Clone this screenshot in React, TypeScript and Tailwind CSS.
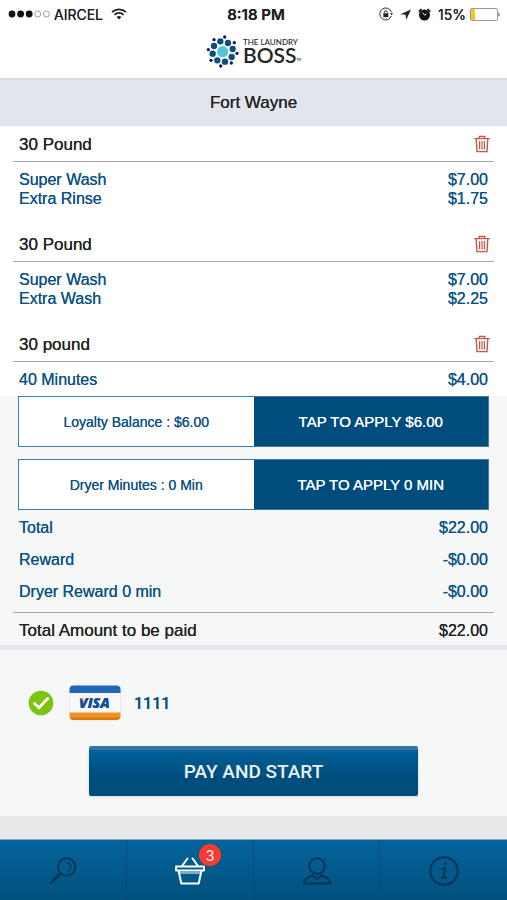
import React from 'react';

type LineItem = { name: string; price: string };
type Machine = { id: number; title: string; items: LineItem[] };

const machines: Machine[] = [
    {
        id: 1,
        title: '30 Pound',
        items: [
            { name: 'Super Wash', price: '$7.00' },
            { name: 'Extra Rinse', price: '$1.75' },
        ],
    },
    {
        id: 2,
        title: '30 Pound',
        items: [
            { name: 'Super Wash', price: '$7.00' },
            { name: 'Extra Wash', price: '$2.25' },
        ],
    },
    { id: 3, title: '30 pound', items: [{ name: '40 Minutes', price: '$4.00' }] },
];

const totals: LineItem[] = [
    { name: 'Total', price: '$22.00' },
    { name: 'Reward', price: '-$0.00' },
    { name: 'Dryer Reward 0 min', price: '-$0.00' },
];

const StatusBar: React.FC = () => (
    <div className="grid h-7 grid-cols-3 items-center pr-[7px] pl-2 font-['Inter',sans-serif] text-[14px] text-[#222]">
        <div className="flex items-center gap-1">
            <svg width="42" height="8" viewBox="0 0 42 8" aria-hidden="true">
                <circle cx="4" cy="4" r="3.4" fill="#111" />
                <circle cx="12.6" cy="4" r="3.4" fill="#111" />
                <circle cx="21.2" cy="4" r="3.4" fill="#111" />
                <circle cx="29.8" cy="4" r="3" fill="none" stroke="#777" strokeWidth="0.7" />
                <circle cx="38.4" cy="4" r="3" fill="none" stroke="#777" strokeWidth="0.7" />
            </svg>
            <span>AIRCEL</span>
            <svg className="ml-1" width="16" height="12" viewBox="0 0 16 12" fill="none" stroke="#222" aria-hidden="true">
                <path d="M1 4.2C5 0.3 11 0.3 15 4.2" strokeWidth="1.8" />
                <path d="M3.4 6.8C6 4.3 10 4.3 12.6 6.8" strokeWidth="1.8" />
                <path d="M8 11.5 5.6 8.9C7 7.7 9 7.7 10.4 8.9Z" fill="#222" stroke="none" />
            </svg>
        </div>
        <div className="pl-1 text-center text-[15px] font-semibold">8:18 PM</div>
        <div className="flex items-center justify-end gap-[7px]">
            <svg width="14" height="14" viewBox="0 0 14 14" fill="none" stroke="#333" aria-hidden="true">
                <path d="M12.5 5.2A6 6 0 1 0 12.4 9" />
                <path d="M11.1 6 14 6 12.6 8.4Z" fill="#333" stroke="none" />
                <rect x="4.3" y="6.3" width="5" height="3.9" fill="#222" stroke="none" />
                <path d="M5.3 6.5V5.2a1.5 1.5 0 0 1 3 0v1.3" />
            </svg>
            <svg width="11" height="11" viewBox="0 0 11 11" fill="#222" aria-hidden="true">
                <path d="M11 0.5 6.2 10.8 5.6 5.7 0.3 5.2Z" />
            </svg>
            <svg width="13" height="13" viewBox="0 0 13 13" aria-hidden="true">
                <circle cx="6.5" cy="7" r="5.5" fill="#111" />
                <path d="M0.8 3.7 3.6 1M12.2 3.7 9.4 1" stroke="#111" strokeWidth="1.7" />
                <path d="M4.8 4.8 6.6 7.2 8.4 6" stroke="#fff" fill="none" />
            </svg>
            <span className="flex items-center gap-1">
                15%
                <svg width="30" height="13" viewBox="0 0 30 13" aria-hidden="true">
                    <rect x="0.5" y="0.5" width="27" height="12" rx="1.5" fill="#fff" stroke="#999" />
                    <rect x="1" y="1" width="4" height="11" fill="#f8c81c" />
                    <path d="M28.5 4.5c1.5.5 1.5 3.5 0 4Z" fill="#444" />
                </svg>
            </span>
        </div>
    </div>
);

const Logo: React.FC = () => (
    <div className="flex items-center justify-center gap-1 pb-1">
        <svg width="33" height="33" viewBox="0 0 99 99" aria-hidden="true">
            <circle cx="50" cy="50" r="17" fill="#54c5d3" />
            <g fill="#0d4f7c">
                <circle cx="43" cy="19" r="9.5" />
                <circle cx="66" cy="24" r="9.5" />
                <circle cx="80" cy="42" r="9.5" />
                <circle cx="77" cy="66" r="9.5" />
                <circle cx="57" cy="80" r="9.5" />
                <circle cx="34" cy="76" r="9.5" />
                <circle cx="20" cy="56" r="9.5" />
                <circle cx="24" cy="33" r="9.5" />
            </g>
            <g fill="#1b1464">
                <circle cx="56" cy="6" r="5" />
                <circle cx="85" cy="23" r="5" />
                <circle cx="93" cy="55" r="5" />
                <circle cx="76" cy="84" r="5" />
                <circle cx="44" cy="93" r="5" />
                <circle cx="15" cy="76" r="5" />
                <circle cx="7" cy="44" r="5" />
                <circle cx="24" cy="14" r="5" />
            </g>
        </svg>
        <div className="font-['Lato',sans-serif] text-[#262626] [text-shadow:none]">
            <div className="text-[8px] leading-2 font-medium">THE LAUNDRY</div>
            <div className="flex items-end text-[21px] leading-[18px] font-semibold">
                BOSS<span className="text-[3px] leading-2">TM</span>
            </div>
        </div>
    </div>
);

const TrashIcon: React.FC = () => (
    <svg width="16" height="18" viewBox="0 0 16 18" fill="none" stroke="#c4574c" strokeWidth="1.4" aria-hidden="true">
        <path d="M0.3 3.6h15.4M5.3 3.2V1.5h5.4v1.7" />
        <path d="M2.2 3.8 3 16.6h10l.8-12.8" />
        <path d="M5.6 6v8.5M8 6v8.5M10.4 6v8.5" strokeWidth="1.2" />
    </svg>
);

const VisaCard: React.FC = () => (
    <svg width="52" height="36" viewBox="0 0 52 36" role="img" aria-label="Visa">
        <rect x="0.5" y="1" width="51" height="34.5" rx="4" fill="#dcdcdc" />
        <rect x="1" y="7" width="50" height="21" fill="#f9f9fb" />
        <path d="M0.5 8V4.5a4 4 0 0 1 4-4h43a4 4 0 0 1 4 4V8Z" fill="#1d68b8" />
        <path d="M0.5 27.5v3.5a4 4 0 0 0 4 4h43a4 4 0 0 0 4-4v-3.5Z" fill="#f0951f" />
        <path d="M1 32.5a4 3 0 0 0 3.5 2.5h43a4 3 0 0 0 3.5-2.5Z" fill="#d97a12" />
        <text
            x="10"
            y="23"
            fill="#174f97"
            fontFamily="Open Sans, sans-serif"
            fontSize="14"
            fontWeight="800"
            fontStyle="italic"
        >
            VISA
        </text>
        <path d="M10 13h3.6l1.6 4C14 15 12 13.8 10 13Z" fill="#f0951f" />
    </svg>
);

const ApplyRow: React.FC<{ label: string; action: string }> = ({ label, action }) => (
    <div className="flex h-[51px] border border-[#3d7ca5] bg-white">
        <div className="flex flex-1 items-center justify-center pt-px text-[14px]">{label}</div>
        <button type="button" className="flex-1 bg-[#004c7d] text-[15px] text-white [text-shadow:0_0_0_currentColor]">
            {action}
        </button>
    </div>
);

const SearchIcon = () => (
    <svg width="28" height="30" viewBox="0 0 28 30" fill="none" stroke="#063454" strokeLinecap="round" aria-hidden="true">
        <circle cx="17.7" cy="11" r="8.7" strokeWidth="2" />
        <path d="M11.5 17.5 2 27" strokeWidth="2.6" />
        <path d="M18.5 6.5a5 5 0 0 1 3.3 5M20.5 14l-1 .8" strokeWidth="1.6" />
    </svg>
);

const BasketIcon = () => (
    <svg
        width="30"
        height="30"
        viewBox="0 0 30 30"
        fill="none"
        stroke="#fff"
        strokeWidth="2"
        strokeLinecap="round"
        strokeLinejoin="round"
        aria-hidden="true"
    >
        <path d="M1 10.5h28v4H1Z" />
        <path d="M3.5 14.5 6.3 27.5h17.4l2.8-13" />
        <path d="M5 17h20" strokeWidth="1" />
        <path d="M7 10 12.5 2.5M23 10 17.5 2.5" />
    </svg>
);

const PersonIcon = () => (
    <svg
        width="30"
        height="30"
        viewBox="0 0 30 30"
        fill="none"
        stroke="#063454"
        strokeWidth="2"
        strokeLinejoin="round"
        aria-hidden="true"
    >
        <circle cx="15" cy="10" r="7.8" />
        <path d="M10.5 19.5C5.5 21 2.5 23 1.5 27.5h27C27.5 23 24.5 21 19.5 19.5L17 21 15 23.5 13 21Z" />
    </svg>
);

const InfoIcon = () => (
    <svg width="30" height="30" viewBox="0 0 30 30" fill="none" stroke="#063454" strokeWidth="2" aria-hidden="true">
        <circle cx="15" cy="15" r="13.7" />
        <path d="M12.3 13.3 16.3 12 14.7 21c-.2 1.5 1.2 1.4 3.3.3M12 21.8l3-.3" />
        <circle cx="16.5" cy="7.5" r="1.5" fill="#063454" stroke="none" />
    </svg>
);

const tabs = [
    { name: 'Search', Icon: SearchIcon, badge: 0 },
    { name: 'Basket', Icon: BasketIcon, badge: 3 },
    { name: 'Account', Icon: PersonIcon, badge: 0 },
    { name: 'Info', Icon: InfoIcon, badge: 0 },
];

const TabBar: React.FC = () => (
    <nav className="grid h-[61px] grid-cols-4 divide-x divide-[#064a75] border-t border-[#7fa9bb] bg-linear-to-b from-[#03639b] to-[#02517f]">
        {tabs.map(({ name, Icon, badge }) => (
            <a key={name} href="#" aria-label={name} className="flex items-center justify-center pt-0.5 pl-px">
                <span className="relative">
                    <Icon />
                    {badge > 0 && (
                        <span className="absolute -top-3 -right-4 flex size-[22px] items-center justify-center rounded-full bg-[#fb3b30] font-['Inter',sans-serif] text-[14px] text-white [text-shadow:none]">
                            {badge}
                        </span>
                    )}
                </span>
            </a>
        ))}
    </nav>
);

export default function App() {
    return (
        <div className="flex min-h-screen flex-col bg-white font-['Liberation_Sans',Arial,sans-serif] text-[16px] leading-[19px] text-[#0a5385] [text-shadow:0_0_0_currentColor]">
            <header>
                <StatusBar />
                <div className="flex h-[52px] items-center justify-center border-b-2 border-[#dadbde]">
                    <Logo />
                </div>
                <h1 className="flex h-[46px] items-center justify-center border-b border-[#dfe2e2] bg-[#e2e5ed] text-[17px] text-[#222]">
                    Fort Wayne
                </h1>
            </header>

            <main>
                {machines.map((machine) => (
                    <section key={machine.id} className="px-[13px] pb-[18px] last-of-type:pb-[7px]">
                        <div className="flex h-9 items-center justify-between border-b border-[#a8a8a8] pt-px pr-1 pl-[6px] text-[17px] text-[#222]">
                            <h2>{machine.title}</h2>
                            <button type="button" aria-label={`Remove ${machine.title}`}>
                                <TrashIcon />
                            </button>
                        </div>
                        <ul className="px-[6px] pt-2">
                            {machine.items.map((item) => (
                                <li key={item.name} className="flex justify-between">
                                    <span>{item.name}</span>
                                    <span>{item.price}</span>
                                </li>
                            ))}
                        </ul>
                    </section>
                ))}

                <div className="bg-[#f6f8f8]">
                    <div className="flex flex-col gap-3 px-[18px]">
                        <ApplyRow label="Loyalty Balance : $6.00" action="TAP TO APPLY $6.00" />
                        <ApplyRow label="Dryer Minutes : 0 Min" action="TAP TO APPLY 0 MIN" />
                    </div>
                    <div className="px-[13px]">
                        <ul className="px-[6px] pt-px pb-[5px]">
                            {totals.map((row) => (
                                <li key={row.name} className="flex h-8 items-center justify-between">
                                    <span>{row.name}</span>
                                    <span>{row.price}</span>
                                </li>
                            ))}
                        </ul>
                        <div className="flex h-[33px] items-center justify-between border-t border-[#a8a8a8] px-[6px] pt-0.5 text-[#222]">
                            <span className="text-[17px]">Total Amount to be paid</span>
                            <span>$22.00</span>
                        </div>
                    </div>
                    <div className="border-t-[5px] border-[#e4e7ef] px-7 pt-[35px] pb-5">
                        <div className="flex items-center">
                            <svg width="26" height="26" viewBox="0 0 26 26" aria-hidden="true">
                                <circle cx="13" cy="13" r="12.3" fill="#7dc411" />
                                <path
                                    d="m6.5 13.5 4.5 4.3 8.7-9.3"
                                    fill="none"
                                    stroke="#fff"
                                    strokeWidth="2.8"
                                    strokeLinecap="round"
                                />
                            </svg>
                            <span className="ml-[15px]">
                                <VisaCard />
                            </span>
                            <span className="ml-[13px] font-['Roboto',sans-serif] font-medium">1111</span>
                        </div>
                        <button
                            type="button"
                            className="mx-auto mt-[25px] block h-[50px] w-[73%] rounded-xs border-t-4 border-[#2f75a6] bg-linear-to-b from-[#02609a] to-[#004c7b] to-60% pb-1 font-['Roboto',sans-serif] text-[19px] font-medium text-[#e9f1f6] shadow-sm"
                        >
                            PAY AND START
                        </button>
                    </div>
                </div>
            </main>

            <div className="min-h-[23px] flex-1 bg-[#e7e9eb]" />
            <TabBar />
        </div>
    );
}
